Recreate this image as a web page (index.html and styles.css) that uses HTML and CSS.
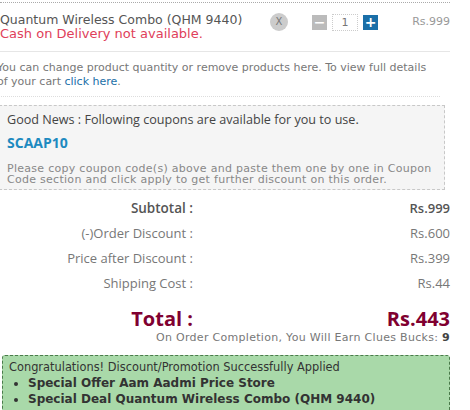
FILE: index.html
```html
<!DOCTYPE html>
<html lang="en">
<head>
  <meta charset="UTF-8" />
  <title>Shopping Cart</title>
  <link rel="stylesheet" href="styles.css">
</head>
<body>
  <div class="carrito">
    <!-- producto -->
    <div class="item">
      <div class="item-nombre">
        <div class="nombre">Quantum Wireless Combo (QHM 9440)</div>
        <div class="cod">Cash on Delivery not available.</div>
      </div>
      <span class="quitar">X</span>
      <div class="cantidad">
        <span class="btn-menos">&minus;</span>
        <span class="qty">1</span>
        <span class="btn-mas">+</span>
      </div>
      <div class="precio">Rs.999</div>
    </div>

    <p class="nota">You can change product quantity or remove products here. To view full details of your cart <a href="#">click here</a>.</p>

    <!-- cupones -->
    <div class="cupones">
      <div class="cupones-titulo">Good News : Following coupons are available for you to use.</div>
      <div class="codigo">SCAAP10</div>
      <p class="cupones-ayuda">Please copy coupon code(s) above and paste them one by one in Coupon Code section and click apply to get further discount on this order.</p>
    </div>

    <!-- totales -->
    <div class="resumen">
      <div class="etiqueta fuerte">Subtotal :</div>
      <div class="valor fuerte">Rs.999</div>
      <div class="etiqueta">(-)Order Discount :</div>
      <div class="valor">Rs.600</div>
      <div class="etiqueta">Price after Discount :</div>
      <div class="valor">Rs.399</div>
      <div class="etiqueta">Shipping Cost :</div>
      <div class="valor">Rs.44</div>
    </div>

    <div class="total">
      <div class="etiqueta">Total :</div>
      <div class="valor">Rs.443</div>
    </div>
    <p class="bucks">On Order Completion, You Will Earn Clues Bucks: <b>9</b></p>

    <div class="promo">
      <div class="promo-titulo">Congratulations! Discount/Promotion Successfully Applied</div>
      <ul>
        <li>Special Offer Aam Aadmi Price Store</li>
        <li>Special Deal Quantum Wireless Combo (QHM 9440)</li>
      </ul>
    </div>
  </div>
</body>
</html>
```

FILE: styles.css
```css
body {
  margin: 0;
  background: #fff;
  font-family: "DejaVu Sans", Verdana, sans-serif;
  color: #555;
}

.carrito {
  width: 450px;
  padding-top: 2px;
}

.item {
  display: flex;
  align-items: flex-start;
  border-top: 1px dotted #aaa;
  border-bottom: 1px solid #e6e6e6;
  padding: 10px 0 11px;
}

.item-nombre {
  flex: 1;
}

.nombre {
  font-size: 12.5px;
  line-height: 14px;
  color: #555;
}

.cod {
  font-size: 13px;
  line-height: 13px;
  color: #e0405a;
}

.quitar {
  width: 18px;
  height: 18px;
  margin: 0 24px 0 0;
  border-radius: 50%;
  background: #ccc;
  color: #777;
  font-size: 10px;
  line-height: 18px;
  text-align: center;
}

.cantidad {
  display: flex;
  align-items: center;
  gap: 5px;
  margin-top: 1px;
}

.btn-menos,
.btn-mas {
  width: 15px;
  height: 15px;
  color: #fff;
  font-size: 14px;
  font-weight: bold;
  line-height: 15px;
  text-align: center;
}

.btn-menos {
  background: #bbb;
}

.btn-mas {
  background: #1a6fa8;
}

.qty {
  width: 24px;
  height: 15px;
  border: 1px dotted #ccc;
  font-size: 11px;
  line-height: 15px;
  text-align: center;
  color: #777;
}

.precio {
  width: 72px;
  text-align: right;
  font-size: 11px;
  line-height: 17px;
  color: #999;
}

.nota {
  margin: 9px 10px 0 -3px;
  padding-bottom: 7px;
  border-bottom: 1px dotted #ddd;
  font-size: 11px;
  line-height: 14px;
  color: #777;
}

.nota a {
  color: #1a6fa8;
  text-decoration: none;
}

.cupones {
  margin: 8px 5px 0 -1px;
  padding: 5px 6px 4px 7px;
  background: #f5f5f5;
  border: 1px dashed #c8c8c8;
}

.cupones-titulo {
  font-family: "Open Sans", sans-serif;
  font-size: 12.6px;
  line-height: 18px;
  color: #444;
}

.codigo {
  margin-top: 4px;
  font-family: "Open Sans", sans-serif;
  font-size: 14px;
  font-weight: 700;
  line-height: 20px;
  color: #1d8ac0;
}

.cupones-ayuda {
  margin: 10px 0 0;
  font-size: 11px;
  line-height: 11px;
  letter-spacing: 0.28px;
  color: #888;
}

.resumen,
.total {
  display: grid;
  grid-template-columns: 193px 1fr;
  row-gap: 7px;
  font-family: "Open Sans", sans-serif;
  font-size: 13px;
  line-height: 18px;
  color: #777;
}

.resumen {
  margin-top: 9px;
}

.etiqueta,
.valor {
  text-align: right;
}

.fuerte {
  font-weight: 600;
  color: #555;
}

.etiqueta.fuerte {
  font-size: 13.5px;
}

.total {
  margin-top: 15px;
  font-size: 20px;
  line-height: 24px;
  font-weight: 700;
  color: #800030;
}

.bucks {
  margin: 0;
  text-align: right;
  font-size: 11px;
  line-height: 14px;
  letter-spacing: 0.3px;
  color: #777;
}

.bucks b {
  color: #444;
}

.promo {
  margin: 10px 0 0 2px;
  padding: 3px 6px 10px;
  background: #a9d9a9;
  border: 1px dashed #4a7a4a;
  border-radius: 3px;
  font-size: 12px;
  line-height: 16px;
  color: #333;
}

.promo-titulo {
  font-size: 11.4px;
}

.promo ul {
  margin: 0;
  padding-left: 19px;
  font-weight: bold;
}
```
